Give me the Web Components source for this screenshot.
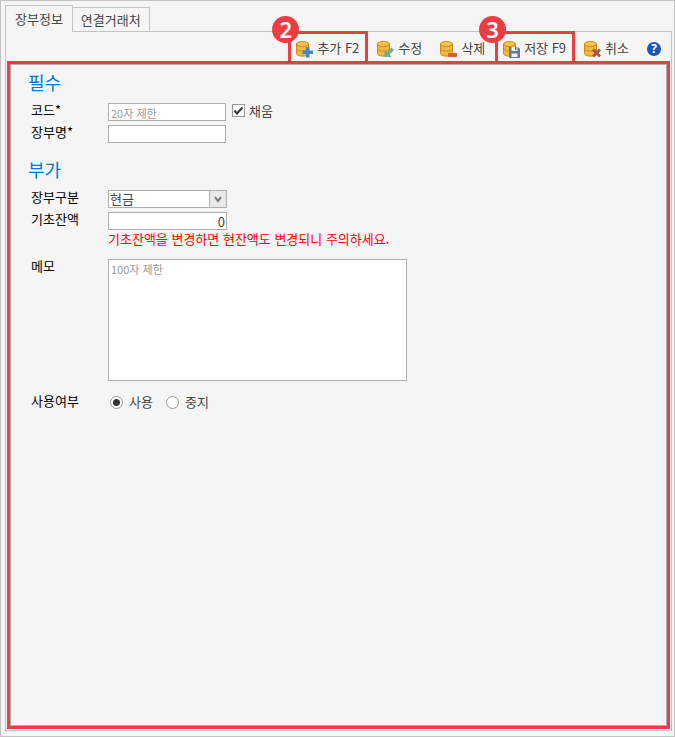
<!DOCTYPE html>
<html lang="ko">
<head>
<meta charset="utf-8">
<title>장부정보</title>
<style>
  body {
    margin: 0;
    font: 13px/18px "Noto Sans CJK KR", sans-serif;
    color: #444;
    background: #f5f5f5;
  }
</style>
</head>
<body>
<ledger-window></ledger-window>

<script>
const define = (name, html, setup) => {
  const template = document.createElement("template");
  template.innerHTML = html;
  customElements.define(
    name,
    class extends HTMLElement {
      constructor() {
        super();
        this.attachShadow({ mode: "open" });
        this.shadowRoot.appendChild(template.content.cloneNode(true));
      }

      connectedCallback() {
        if (setup) setup(this, this.shadowRoot);
      }
    }
  );
};

// small badges drawn over the coin stack
const marks = {
  add: `<path d="M10 6h3.500v3.500H17V13h-3.500v3.500H10V13H6.500V9.500H10z" fill="#4a86c5"/>`,
  edit: `<path d="M14.500 6.500L17 9l-4.500 4.500 2 2.500H7.500V9l2.500 2z" fill="#72ab96"/>`,
  remove: `<rect x="8" y="12" width="9" height="4" rx="1" fill="#d95a3c"/>`,
  save: `<path d="M6 6h9l2 2v9H6z" fill="#5c7c91"/><path d="M8.500 6h6v4h-6zM8.500 12.500h6V16h-6z" fill="#eef2f4"/><path d="M12 6h1.500v3H12z" fill="#5c7c91"/>`,
  cancel: `<path d="M10 7.500l2.500 2.500L15 7.500l2 2-2.500 2.500 2.500 2.500-2 2-2.500-2.500-2.500 2.500-2-2 2.500-2.500L8 9.500z" fill="#a74f50"/>`,
};

define(
  "tool-button",
  `
<style>
  :host {
    display: block;
    position: relative;
    border: 3px solid transparent;
    border-bottom: 0;
  }
  :host([step]) { border-color: #ee3c43; }
  button {
    display: flex;
    align-items: center;
    gap: 4px;
    height: 29px;
    padding: 0 6px 0 5px;
    border: 0;
    background: none;
    font: inherit;
    color: inherit;
    white-space: nowrap;
    cursor: pointer;
  }
  svg { width: 17px; height: 17px; margin-top: 2px; }
  .step {
    position: absolute;
    left: -19px;
    top: -18px;
    width: 27px;
    height: 27px;
    border-radius: 50%;
    background: #ee3c43;
    color: #fff;
    font: 600 22px/27px "Noto Sans", sans-serif;
    text-align: center;
  }
  .step:empty { display: none; }
</style>
<button type="button">
  <svg viewBox="0 0 17 17" aria-hidden="true">
    <path d="M.500 3v9.500c0 3.500 12 3.500 12 0V3z" fill="#f0b840" stroke="#c98b10"/>
    <path d="M.500 7.500c0 3.500 12 3.500 12 0" fill="none" stroke="#c98b10"/>
    <ellipse cx="6.500" cy="3" rx="6" ry="2.500" fill="#f6c552" stroke="#c98b10"/>
    <g id="mark"></g>
  </svg>
  <slot></slot>
</button>
<span class="step"></span>
`,
  (host, root) => {
    root.getElementById("mark").innerHTML = marks[host.getAttribute("icon")];
    root.querySelector(".step").textContent = host.getAttribute("step") || "";
  }
);

define(
  "help-button",
  `
<style>
  :host { display: block; }
  button {
    display: block;
    width: 14px;
    height: 14px;
    padding: 0;
    border: 0;
    border-radius: 50%;
    background: #1b57b5;
    color: #fff;
    font: bold 12px/14px "Open Sans", sans-serif;
  }
</style>
<button type="button" aria-label="도움말">?</button>
`
);

define(
  "tab-strip",
  `
<style>
  :host { display: flex; align-items: flex-end; }
  button {
    height: 24px;
    padding: 0 8px;
    margin-left: -1px;
    border: 1px solid #c3c3c3;
    border-bottom: 0;
    background: #f5f5f5;
    font: inherit;
    line-height: 22px;
    color: inherit;
  }
  button[aria-selected="true"] {
    position: relative;
    height: 27px;
    margin: 0 0 -1px;
    padding: 0 9px;
  }
</style>
<button type="button" role="tab" aria-selected="true">장부정보</button>
<button type="button" role="tab" aria-selected="false">연결거래처</button>
`
);

define(
  "form-section",
  `
<style>
  :host { display: flex; flex-direction: column; gap: 4px; }
  h2 {
    margin: 0 0 5px 18px;
    font-size: 18px;
    font-weight: normal;
    line-height: 24px;
    color: #0078d7;
  }
</style>
<h2></h2>
<slot></slot>
`,
  (host, root) => {
    root.querySelector("h2").textContent = host.getAttribute("heading");
  }
);

const fieldStyle = `
<style>
  :host {
    display: grid;
    grid-template-columns: 77px 1fr;
    align-items: start;
    padding-left: 21px;
  }
  .name { color: #000; line-height: 14px; }
  .control { display: flex; align-items: center; gap: 6px; }
  input, select, textarea {
    box-sizing: border-box;
    margin: 0;
    border: 1px solid #aeaeae;
    border-radius: 0;
    background: #fff;
    color: #444;
    font: inherit;
  }
  .text, select { width: 118px; height: 18px; padding: 0 2px; line-height: 16px; }
  ::placeholder { color: #999; font-size: 11px; }
</style>`;

define(
  "text-field",
  `${fieldStyle}
<style>
  .number { width: 119px; text-align: right; padding: 0 1px; }
  .note { grid-column: 2; color: #f00; }
  .note:empty { display: none; }
</style>
<label class="name" for="input"></label>
<div class="control"><input class="text" id="input" type="text"><slot></slot></div>
<span class="note"></span>
`,
  (host, root) => {
    const input = root.getElementById("input");
    root.querySelector(".name").textContent = host.getAttribute("label");
    root.querySelector(".note").textContent = host.getAttribute("note") || "";
    input.placeholder = host.getAttribute("placeholder") || "";
    input.value = host.getAttribute("value") || "";
    input.classList.toggle("number", host.hasAttribute("number"));
  }
);

define(
  "check-box",
  `
<style>
  :host { display: block; align-self: flex-start; }
  label { display: flex; align-items: center; gap: 4px; line-height: 15px; }
  .box { display: grid; }
  .box > * { grid-area: 1 / 1; }
  input {
    appearance: none;
    width: 13px;
    height: 13px;
    margin: 0;
    border: 1px solid #999;
    background: #fff;
  }
  svg { width: 13px; height: 13px; pointer-events: none; visibility: hidden; }
  input:checked + svg { visibility: visible; }
</style>
<label>
  <span class="box">
    <input type="checkbox" checked>
    <svg viewBox="0 0 13 13"><path d="M2.500 6.500L5 9.500l5.500-6" fill="none" stroke="#333" stroke-width="2"/></svg>
  </span>
  <slot></slot>
</label>
`
);

define(
  "select-field",
  `${fieldStyle}
<style>
  .box { display: grid; }
  .box > * { grid-area: 1 / 1; }
  select { appearance: none; width: 119px; padding: 0 1px; }
  svg {
    justify-self: end;
    box-sizing: border-box;
    width: 18px;
    height: 18px;
    border: 1px solid #aeaeae;
    background: #e9e9e9;
    pointer-events: none;
  }
</style>
<label class="name" for="select"></label>
<div class="control">
  <span class="box">
    <select id="select"></select>
    <svg viewBox="0 0 16 16"><path d="M5 6l3 4 3-4" fill="none" stroke="#777" stroke-width="2"/></svg>
  </span>
</div>
`,
  (host, root) => {
    root.querySelector(".name").textContent = host.getAttribute("label");
    root.getElementById("select").add(new Option(host.getAttribute("value")));
  }
);

define(
  "memo-field",
  `${fieldStyle}
<style>
  textarea {
    width: 100%;
    max-width: 299px;
    height: 122px;
    padding: 0 2px;
    resize: none;
  }
</style>
<label class="name" for="memo"></label>
<div class="control"><textarea id="memo"></textarea></div>
`,
  (host, root) => {
    root.querySelector(".name").textContent = host.getAttribute("label");
    root.getElementById("memo").placeholder = host.getAttribute("placeholder");
  }
);

define(
  "use-field",
  `${fieldStyle}
<style>
  .control { gap: 13px; padding-left: 2px; }
  .control label { display: flex; align-items: center; gap: 6px; line-height: 16px; }
  input {
    appearance: none;
    width: 13px;
    height: 13px;
    border-color: #999;
    border-radius: 50%;
  }
  input:checked { background: radial-gradient(circle, #333 3px, #fff 4px); }
</style>
<span class="name" id="name">사용여부</span>
<div class="control" role="radiogroup" aria-labelledby="name">
  <label><input type="radio" name="use" checked>사용</label>
  <label><input type="radio" name="use">중지</label>
</div>
`
);

define(
  "ledger-form",
  `
<style>
  :host {
    display: flex;
    flex-direction: column;
    gap: 14px;
    flex: 1;
    margin: 0 1px 1px;
    padding: 6px 0;
    border: 3px solid #ee3c43;
    box-shadow: inset 0 0 0 1px #aeaeae;
  }
  memo-field { margin-top: 7px; }
  use-field { margin-top: 9px; }
</style>
<form-section heading="필수">
  <text-field label="코드*" placeholder="20자 제한"><check-box>채움</check-box></text-field>
  <text-field label="장부명*"></text-field>
</form-section>
<form-section heading="부가">
  <select-field label="장부구분" value="현금"></select-field>
  <text-field label="기초잔액" value="0" number note="기초잔액을 변경하면 현잔액도 변경되니 주의하세요."></text-field>
  <memo-field label="메모" placeholder="100자 제한"></memo-field>
  <use-field></use-field>
</form-section>
`
);

// the check box is slotted, so its row alignment is set on its own host
define(
  "ledger-window",
  `
<style>
  :host {
    box-sizing: border-box;
    display: flex;
    flex-direction: column;
    min-height: 100vh;
    padding: 4px 2px 5px 4px;
    border: 1px solid #c3c3c3;
  }
  main {
    display: flex;
    flex-direction: column;
    flex: 1;
    border: 1px solid #c3c3c3;
  }
  nav {
    display: flex;
    justify-content: flex-end;
    align-items: center;
    gap: 1px;
    padding-right: 10px;
    height: 29px;
  }
  help-button { margin: 5px 0 0 8px; }
</style>
<tab-strip role="tablist"></tab-strip>
<main>
  <nav>
    <tool-button icon="add" step="2">추가 F2</tool-button>
    <tool-button icon="edit">수정</tool-button>
    <tool-button icon="remove">삭제</tool-button>
    <tool-button icon="save" step="3">저장 F9</tool-button>
    <tool-button icon="cancel">취소</tool-button>
    <help-button></help-button>
  </nav>
  <ledger-form></ledger-form>
</main>
`
);
</script>
</body>
</html>
